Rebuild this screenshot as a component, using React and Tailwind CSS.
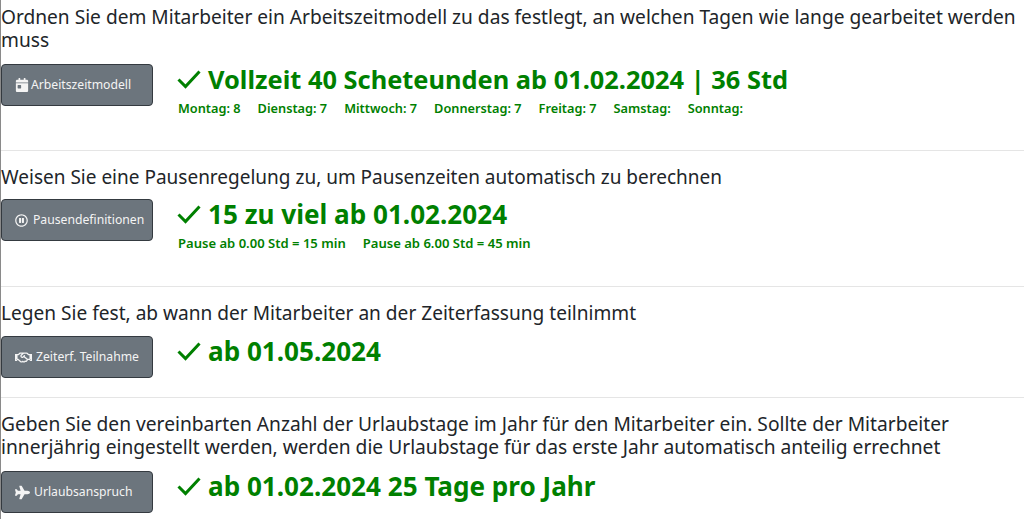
import { FaCalendarDay, FaRegPauseCircle, FaRegHandshake, FaPlane } from "react-icons/fa";

const CheckIcon = () => (
    <svg width="24" height="20" viewBox="0 0 24 20" fill="none" stroke="#008000" strokeWidth="3" className="shrink-0">
        <path d="M1.5 10.5 L8.5 17.5 L22.5 2.5" />
    </svg>
);

const Section = ({ text, textClass, icon, label, result, resultClass, details, detailClass, className, rowClass }) => (
    <div className={className}>
        <p className={`${textClass} leading-[23px] text-[#212529]`}>{text}</p>
        <div className={`flex ${rowClass}`}>
            <button className="w-[152px] h-[42px] shrink-0 flex items-center pl-[13px] bg-[#6c757d] border border-[#343a40] rounded-[4px] text-[12.2px] text-[#f4f4f4]">
                {icon}
                {label}
            </button>
            <div className="ml-[24px]">
                <div className={`flex items-center gap-[7px] ${resultClass} leading-[30px] font-bold text-[#008000]`}>
                    <CheckIcon />
                    {result}
                </div>
                {details && (
                    <div className={`flex gap-[17px] mt-[6px] ml-[1px] ${detailClass} leading-[16px] font-semibold text-[#008000]`}>
                        {details.map((d) => (
                            <span key={d}>{d}</span>
                        ))}
                    </div>
                )}
            </div>
        </div>
    </div>
);

const App = () => {
    return (
        <div className="w-[1024px] h-[519px] overflow-hidden bg-white border-l border-[#8a8a8a] font-['Noto_Sans',sans-serif]">
            <Section
                className="h-[151px] pt-[6px] border-b border-[#e5e5e5]"
                rowClass="mt-[12px]"
                textClass="text-[19.15px]"
                text="Ordnen Sie dem Mitarbeiter ein Arbeitszeitmodell zu das festlegt, an welchen Tagen wie lange gearbeitet werden muss"
                icon={<FaCalendarDay size={14} className="shrink-0 mr-[2px]" />}
                label="Arbeitszeitmodell"
                resultClass="text-[25.4px]"
                result="Vollzeit 40 Scheteunden ab 01.02.2024 | 36 Std"
                detailClass="text-[12.75px]"
                details={["Montag: 8", "Dienstag: 7", "Mittwoch: 7", "Donnerstag: 7", "Freitag: 7", "Samstag:", "Sonntag:"]}
            />
            <Section
                className="h-[136px] pt-[15px] border-b border-[#e5e5e5]"
                rowClass="mt-[10px]"
                textClass="text-[19px]"
                text="Weisen Sie eine Pausenregelung zu, um Pausenzeiten automatisch zu berechnen"
                icon={<FaRegPauseCircle size={13} className="shrink-0 mr-[5px]" />}
                label="Pausendefinitionen"
                resultClass="text-[26.1px]"
                result="15 zu viel ab 01.02.2024"
                detailClass="text-[13.05px]"
                details={["Pause ab 0.00 Std = 15 min", "Pause ab 6.00 Std = 45 min"]}
            />
            <Section
                className="h-[111px] pt-[15px] border-b border-[#e5e5e5]"
                rowClass="mt-[11px]"
                textClass="text-[19.1px]"
                text="Legen Sie fest, ab wann der Mitarbeiter an der Zeiterfassung teilnimmt"
                icon={<FaRegHandshake size={17} className="shrink-0 mr-[4px]" />}
                label="Zeiterf. Teilnahme"
                resultClass="text-[26.1px]"
                result="ab 01.05.2024"
            />
            <Section
                className="pt-[14px]"
                rowClass="mt-[13px]"
                textClass="text-[19.2px]"
                text="Geben Sie den vereinbarten Anzahl der Urlaubstage im Jahr für den Mitarbeiter ein. Sollte der Mitarbeiter innerjährig eingestellt werden, werden die Urlaubstage für das erste Jahr automatisch anteilig errechnet"
                icon={<FaPlane size={15} className="shrink-0 mr-[4px]" />}
                label="Urlaubsanspruch"
                resultClass="text-[26.1px]"
                result="ab 01.02.2024 25 Tage pro Jahr"
            />
        </div>
    );
};

export default App;
